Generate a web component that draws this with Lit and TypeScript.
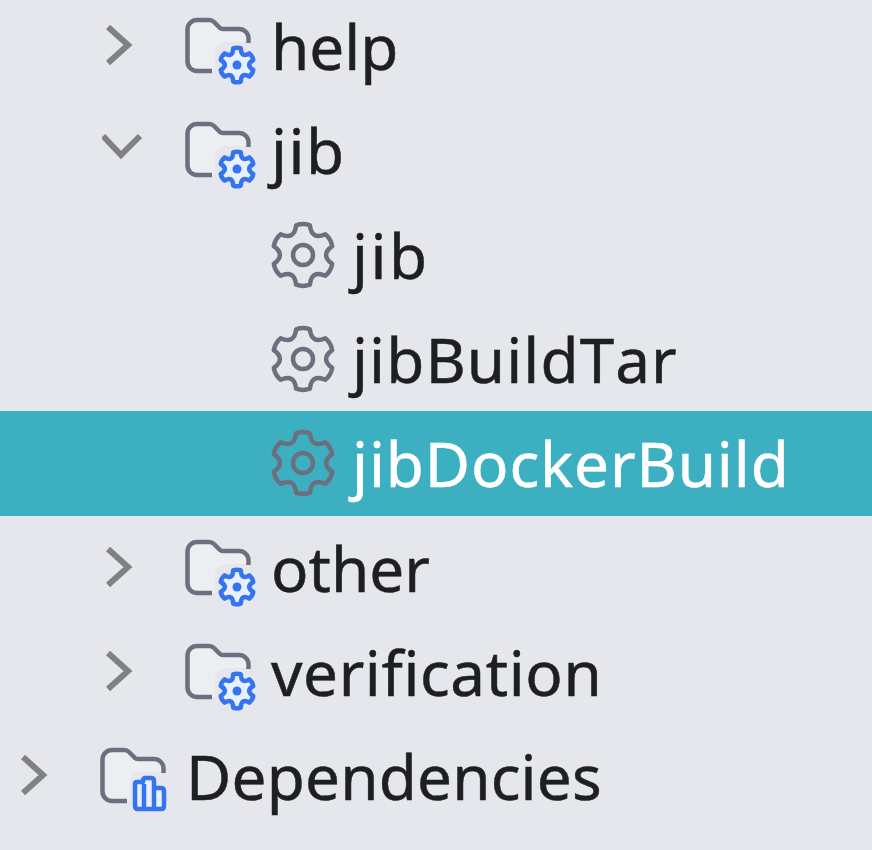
import { LitElement, html, css, svg } from 'lit';
import { customElement } from 'lit/decorators.js';
import { classMap } from 'lit/directives/class-map.js';
import { styleMap } from 'lit/directives/style-map.js';

type Badge = 'gear' | 'bars';

interface TreeNode {
  label: string;
  level: number;
  icon: 'task' | Badge;
  expanded?: boolean;
  selected?: boolean;
  tracking?: number;
}

const NODES: TreeNode[] = [
  { label: 'help', level: 1, icon: 'gear' },
  { label: 'jib', level: 1, icon: 'gear', expanded: true, tracking: 1.5 },
  { label: 'jib', level: 2, icon: 'task', tracking: 2.5 },
  { label: 'jibBuildTar', level: 2, icon: 'task', tracking: 1.1 },
  { label: 'jibDockerBuild', level: 2, icon: 'task', selected: true, tracking: 0.9 },
  { label: 'other', level: 1, icon: 'gear' },
  { label: 'verification', level: 1, icon: 'gear', tracking: 0.6 },
  { label: 'Dependencies', level: 0, icon: 'bars', tracking: 0.2 },
];

// six lobed gear outline, one lobe pointing straight up
function gearPath(cx: number, cy: number, outer: number, inner: number): string {
  const at = (deg: number, r: number) => {
    const rad = (deg * Math.PI) / 180;
    return `${(cx + r * Math.cos(rad)).toFixed(2)} ${(cy + r * Math.sin(rad)).toFixed(2)}`;
  };
  let d = '';
  for (let k = 0; k < 6; k++) {
    const a = k * 60 - 90;
    d += `${k === 0 ? 'M' : 'L'}${at(a - 13, outer)} Q${at(a, outer * 1.06)} ${at(a + 13, outer)} Q${at(a + 30, inner)} ${at(a + 47, outer)} `;
  }
  return d + 'Z';
}

const FOLDER =
  'M12 63a9.5 9.5 0 0 1-9.5-9.5V21.5A9.5 9.5 0 0 1 12 12H24q3 0 5 2l6 6q1 1 3 1H54a9.5 9.5 0 0 1 9.5 9.5V53.5A9.5 9.5 0 0 1 54 63Z';
const FOLDER_LINE =
  'M27 63H12a9.5 9.5 0 0 1-9.5-9.5V21.5A9.5 9.5 0 0 1 12 12H24q3 0 5 2l6 6q1 1 3 1H54a9.5 9.5 0 0 1 9.5 9.5V35';

@customElement('app-root')
export class AppRoot extends LitElement {
  static styles = css`
    :host {
      display: block;
      height: 850px;
      overflow: hidden;
      background: #e6e7ec;
      font-family: 'Noto Sans', 'Open Sans', sans-serif;
    }

    .tree {
      margin-top: -6px;
      filter: blur(0.7px);
    }

    .row {
      display: flex;
      align-items: center;
      height: 104.33px;
      color: #1e1f22;
      font-size: 62px;
      font-kerning: none;
      line-height: 1;
      white-space: nowrap;
      -webkit-text-stroke: 0.5px currentColor;
    }

    .row--selected {
      background: #3cafc1;
      color: #ffffff;
    }

    .row--l0 {
      padding-left: 17px;
    }

    .row--l1 {
      padding-left: 102px;
    }

    .row--l2 {
      padding-left: 270px;
    }

    .chevron {
      flex: none;
      width: 83px;
      height: 80px;
      fill: none;
      stroke: #808185;
      stroke-width: 6;
    }

    .folder {
      flex: none;
      width: 86px;
      height: 80px;
      overflow: visible;
    }

    .task {
      flex: none;
      width: 82px;
      height: 80px;
    }

    .line {
      fill: none;
      stroke: #6c707e;
      stroke-width: 4.5;
      stroke-linejoin: round;
    }

    .folder-fill {
      fill: #eceef2;
    }

    .halo {
      fill: #e6e7ec;
    }

    .badge {
      fill: #e9f0fd;
      stroke: #3574f0;
      stroke-width: 4.5;
      stroke-linejoin: round;
    }

    .badge-dot {
      fill: #3574f0;
    }
  `;

  private renderChevron(node: TreeNode) {
    return html`
      <svg class="chevron" viewBox="0 -2 83 80">
        ${node.expanded
          ? svg`<path d="M1 24 19 43 38 24" />`
          : svg`<path d="M6 19 26 37 6 55" />`}
      </svg>
    `;
  }

  private renderFolder(badge: Badge) {
    return html`
      <svg class="folder" viewBox="0 -2 86 80">
        <path class="folder-fill" d=${FOLDER} />
        <path class="halo" d="M30 76V46Q30 34 42 34H86V76Z" />
        <path class="line" d=${FOLDER_LINE} />
        ${badge === 'gear'
          ? svg`
              <path class="badge" d=${gearPath(52, 57, 17, 8)} />
              <circle class="badge-dot" cx="52" cy="57" r="4.5" />
            `
          : svg`<path class="badge" d="M35 46q0-2 2-2h6v-1q0-3 3-3h5q3 0 3 3v7h7q3 0 3 3v15q0 3-3 3H38q-3 0-3-3ZM44 46V70M54 50V70" />`}
      </svg>
    `;
  }

  private renderTask() {
    return html`
      <svg class="task" viewBox="0 -2 82 80">
        <path class="line" d=${gearPath(33, 38, 30.5, 17)} />
        <circle class="line" cx="33" cy="38" r="10" />
      </svg>
    `;
  }

  render() {
    return html`
      <div class="tree">
        ${NODES.map((node) => {
          const classes = {
            row: true,
            [`row--l${node.level}`]: true,
            'row--selected': !!node.selected,
          };
          return html`
            <div class=${classMap(classes)}>
              ${node.icon === 'task'
                ? this.renderTask()
                : html`${this.renderChevron(node)}${this.renderFolder(node.icon)}`}
              <span style=${styleMap({ letterSpacing: `${node.tracking ?? 0}px` })}>${node.label}</span>
            </div>
          `;
        })}
      </div>
    `;
  }
}

declare global {
  interface HTMLElementTagNameMap {
    'app-root': AppRoot;
  }
}
